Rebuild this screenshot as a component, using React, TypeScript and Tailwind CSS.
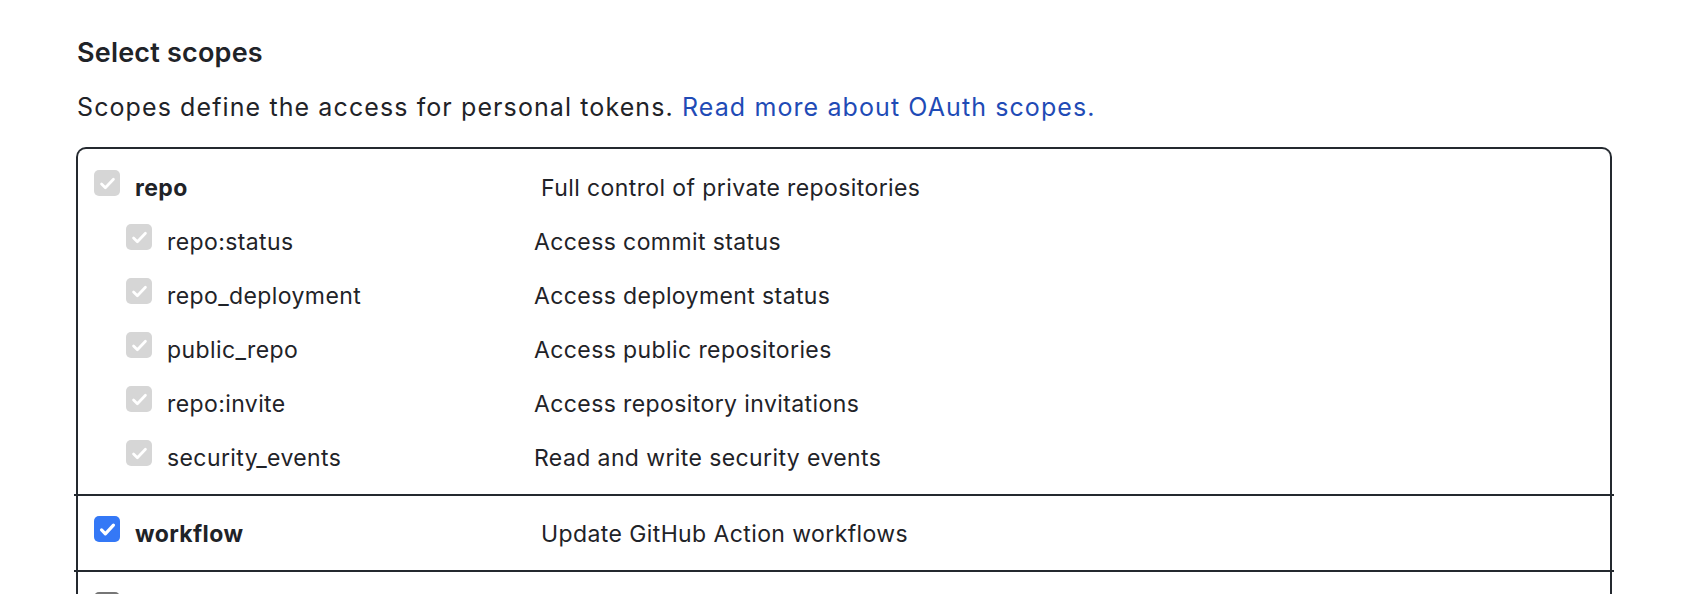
import React from 'react'

interface Scope {
  name: string
  description: string
  checked: boolean
  disabled?: boolean
  children?: {name: string; description: string}[]
}

const scopes: Scope[] = [
  {
    name: 'repo',
    description: 'Full control of private repositories',
    checked: true,
    disabled: true,
    children: [
      {name: 'repo:status', description: 'Access commit status'},
      {name: 'repo_deployment', description: 'Access deployment status'},
      {name: 'public_repo', description: 'Access public repositories'},
      {name: 'repo:invite', description: 'Access repository invitations'},
      {name: 'security_events', description: 'Read and write security events'},
    ],
  },
  {
    name: 'workflow',
    description: 'Update GitHub Action workflows',
    checked: true,
  },
  {
    name: 'write:packages',
    description: 'Upload packages to GitHub Package Registry',
    checked: false,
  },
]

function Box({state}: {state: 'gray' | 'blue' | 'empty'}) {
  if (state === 'empty') {
    return (
      <span className="w-[26px] h-[26px] shrink-0 rounded-[5px] border-2 border-[#767676] bg-white" />
    )
  }
  return (
    <span
      className={
        'w-[26px] h-[26px] shrink-0 rounded-[5px] flex items-center justify-center ' +
        (state === 'blue' ? 'bg-[#3478f6]' : 'bg-[#d6d6d6]')
      }
    >
      <svg width="19" height="19" viewBox="0 0 16 16" fill="none">
        <path
          d="M3 8.4l3.2 3.2L13 4.4"
          stroke="white"
          strokeWidth={state === 'blue' ? 2.7 : 2.3}
          strokeLinecap="round"
          strokeLinejoin="round"
        />
      </svg>
    </span>
  )
}

function Row({
  name,
  description,
  state,
  top,
}: {
  name: string
  description: string
  state: 'gray' | 'blue' | 'empty'
  top?: boolean
}) {
  return (
    <div className={'h-[54px] flex items-center ' + (top ? 'pl-[16px]' : 'pl-[48px]')}>
      <Box state={state} />
      <span
        className={
          'ml-[15px] mt-[10px] text-[23px] tracking-[0.4px] ' +
          (top ? 'font-bold w-[406px]' : 'w-[367px]')
        }
      >
        {name}
      </span>
      <span className="mt-[10px] text-[23px] tracking-[0.4px]">{description}</span>
    </div>
  )
}

export default function App() {
  return (
    <div
      className="bg-white text-[#1f2328] pl-[76px] pr-[92px] pt-[35px] h-[594px] overflow-hidden"
      style={{fontFamily: 'Inter, "Noto Sans", sans-serif'}}
    >
      <h2 className="text-[27px] font-semibold leading-[36px] tracking-[0.2px] pl-[1px]">
        Select scopes
      </h2>
      <p className="mt-[20px] text-[25px] leading-[32px] tracking-[1.1px] pl-[1px]">
        Scopes define the access for personal tokens.{' '}
        <a className="text-[#1f4bb6]" href="#">
          Read more about OAuth scopes.
        </a>
      </p>
      <div className="mt-[24px] border-2 border-[#24292f] rounded-[10px] rounded-b-none border-b-0">
        {scopes.map((s, i) => (
          <div key={s.name}>
            {i > 0 && <div className="h-[2px] bg-[#24292f] -mx-[4px]" />}
            <div className={(i === 0 ? 'pt-[7px]' : 'pt-[6px]') + ' pb-[14px]'}>
              <Row
                name={s.name}
                description={s.description}
                state={s.disabled ? 'gray' : s.checked ? 'blue' : 'empty'}
                top
              />
              {s.children?.map((c) => (
                <Row key={c.name} name={c.name} description={c.description} state="gray" />
              ))}
            </div>
          </div>
        ))}
      </div>
    </div>
  )
}
